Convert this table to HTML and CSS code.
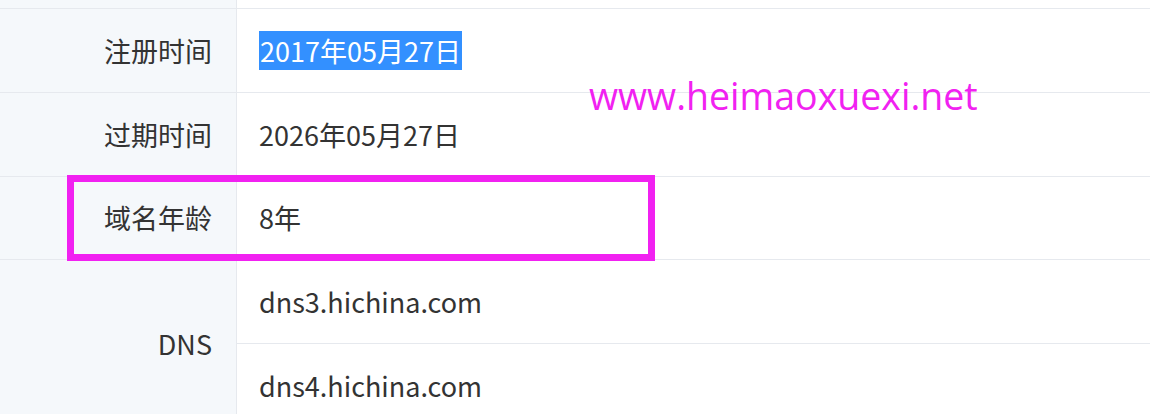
FILE: index.html
```html
<!DOCTYPE html>
<html lang="zh-CN">
<head>
<meta charset="utf-8">
<title>域名信息</title>
<link rel="stylesheet" href="styles.css">
</head>
<body>
<div class="page">
  <table class="info">
    <tr class="row-tail">
      <th class="label"></th>
      <td class="value"></td>
    </tr>
    <tr>
      <th class="label">注册时间</th>
      <td class="value"><span class="selected">2017年05月27日</span></td>
    </tr>
    <tr>
      <th class="label">过期时间</th>
      <td class="value">2026年05月27日</td>
    </tr>
    <tr class="row-short">
      <th class="label">域名年龄</th>
      <td class="value">8年</td>
    </tr>
    <tr>
      <th class="label" rowspan="2">DNS</th>
      <td class="value">dns3.hichina.com</td>
    </tr>
    <tr>
      <td class="value">dns4.hichina.com</td>
    </tr>
  </table>
  <div class="highlight-box"></div>
  <div class="watermark">www.heimaoxuexi.net</div>
</div>
</body>
</html>
```

FILE: styles.css
```css
html, body {
  margin: 0;
  padding: 0;
  background: #ffffff;
}

.page {
  position: relative;
  width: 1150px;
  height: 414px;
  overflow: hidden;
  font-family: "Noto Sans CJK SC", "Noto Sans", sans-serif;
  color: #333333;
}

.info {
  width: 100%;
  border-collapse: collapse;
  table-layout: fixed;
}

.info tr {
  height: 84px;
}

.info .row-tail {
  height: 8px;
}

.info .row-short {
  height: 83px;
}

.info th,
.info td {
  border-bottom: 1px solid #e6e9ee;
  padding: 0;
  font-size: 27px;
  font-weight: 400;
  vertical-align: middle;
  line-height: 39px;
}

.info .label {
  width: 212px;
  padding-right: 24px;
  background: #f5f8fb;
  border-right: 1px solid #e6e9ee;
  text-align: right;
  white-space: nowrap;
}

.info .value {
  padding-left: 22px;
  text-align: left;
  white-space: nowrap;
}

.selected {
  display: inline-block;
  background: #3390ff;
  color: #ffffff;
  line-height: 39px;
  padding: 0 1px;
}

.highlight-box {
  position: absolute;
  left: 67px;
  top: 175px;
  width: 574px;
  height: 72px;
  border: 7px solid #f121f1;
}

.watermark {
  position: absolute;
  left: 589px;
  top: 72px;
  font-family: "Open Sans", "Noto Sans", sans-serif;
  font-size: 37.5px;
  line-height: 48px;
  color: #f121f1;
  white-space: nowrap;
}
```
